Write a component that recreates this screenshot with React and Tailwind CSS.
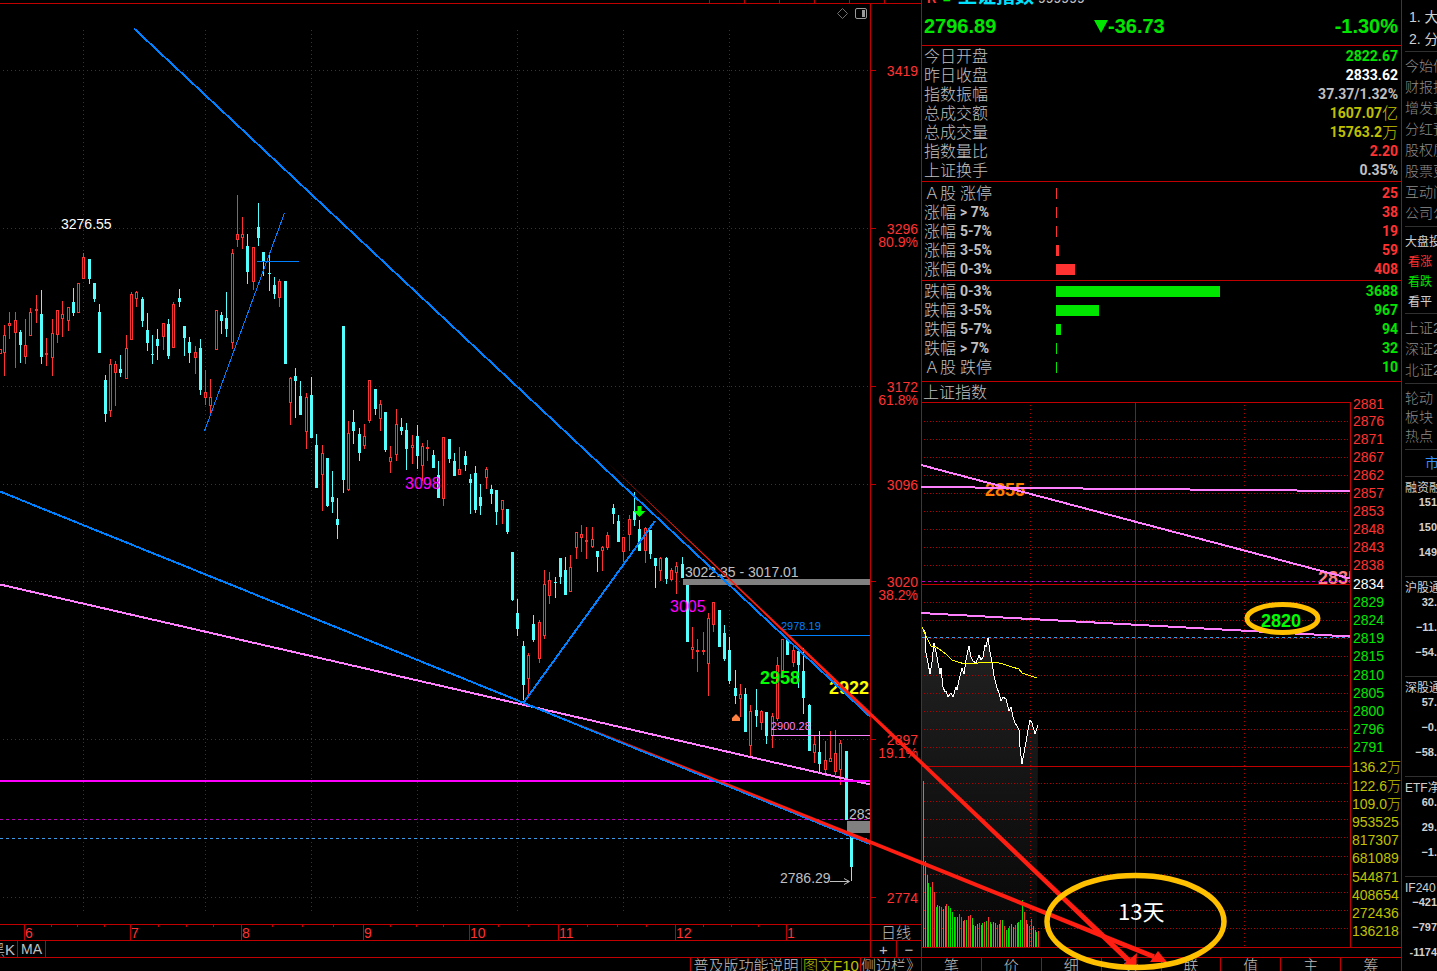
import React from "react";

const SANS = "font-['Liberation_Sans','Noto_Sans_CJK_SC',sans-serif]";

/* x, wick top, wick bottom, body top, body bottom, direction */
const CANDLES = [
  [0, 349, 354, 349, 354, "r"], [4, 325, 376, 335, 353, "r"], [9, 312, 339, 323, 326, "r"], [15, 312, 368, 320, 333, "r"],
  [20, 330, 363, 332, 345, "c"], [25, 319, 364, 345, 357, "r"], [30, 308, 336, 312, 336, "r"], [36, 295, 323, 309, 311, "r"],
  [41, 290, 364, 314, 357, "c"], [46, 338, 366, 353, 355, "r"], [52, 319, 376, 333, 358, "r"], [57, 310, 343, 310, 335, "r"],
  [62, 301, 337, 314, 319, "r"], [68, 307, 331, 307, 321, "r"], [73, 288, 316, 302, 313, "c"], [78, 283, 313, 283, 313, "r"],
  [83, 253, 279, 257, 279, "r"], [89, 259, 284, 259, 279, "c"], [94, 283, 302, 283, 299, "c"], [99, 304, 353, 312, 353, "c"],
  [105, 375, 422, 380, 414, "c"], [110, 359, 417, 364, 411, "r"], [115, 361, 406, 364, 373, "r"], [120, 355, 377, 369, 373, "c"],
  [126, 335, 379, 348, 379, "r"], [131, 292, 340, 294, 340, "r"], [136, 291, 307, 292, 299, "r"], [142, 297, 327, 299, 321, "c"],
  [147, 313, 351, 330, 343, "c"], [152, 335, 364, 354, 355, "c"], [157, 329, 360, 339, 346, "c"], [163, 323, 350, 323, 337, "r"],
  [168, 319, 359, 324, 356, "c"], [173, 302, 348, 304, 348, "r"], [179, 289, 307, 298, 302, "c"], [184, 326, 356, 326, 338, "c"],
  [189, 337, 363, 342, 353, "c"], [195, 346, 374, 352, 358, "r"], [200, 339, 395, 348, 390, "c"], [205, 370, 405, 392, 398, "r"],
  [210, 379, 413, 397, 406, "r"], [216, 310, 350, 310, 350, "r"], [221, 312, 334, 315, 321, "c"], [226, 292, 337, 318, 329, "c"],
  [232, 249, 349, 253, 343, "r"], [237, 195, 247, 234, 240, "r"], [242, 217, 249, 234, 238, "r"], [247, 234, 284, 246, 272, "c"],
  [253, 247, 290, 247, 282, "r"], [258, 203, 246, 227, 238, "c"], [263, 252, 276, 252, 261, "c"], [269, 253, 291, 273, 274, "c"],
  [274, 277, 299, 285, 294, "c"], [279, 279, 307, 281, 298, "r"], [285, 281, 364, 281, 364, "c"], [290, 377, 425, 378, 403, "r"],
  [295, 368, 418, 376, 381, "c"], [300, 381, 415, 396, 415, "c"], [306, 393, 449, 397, 432, "r"], [311, 377, 438, 395, 438, "c"],
  [316, 434, 488, 445, 488, "c"], [322, 445, 511, 453, 475, "r"], [327, 458, 507, 458, 506, "c"], [332, 471, 513, 497, 502, "c"],
  [337, 498, 539, 519, 525, "c"], [343, 326, 493, 326, 480, "c"], [348, 421, 491, 433, 490, "r"], [353, 410, 444, 422, 431, "c"],
  [359, 428, 461, 434, 453, "c"], [364, 424, 449, 436, 446, "r"], [369, 380, 423, 380, 421, "r"], [375, 389, 415, 389, 409, "c"],
  [380, 400, 431, 404, 419, "r"], [385, 412, 452, 412, 450, "c"], [390, 446, 473, 457, 462, "r"], [396, 409, 461, 424, 455, "r"],
  [401, 418, 435, 427, 431, "c"], [406, 423, 470, 430, 449, "c"], [412, 435, 464, 445, 448, "r"], [417, 425, 469, 436, 456, "c"],
  [422, 443, 481, 446, 466, "r"], [427, 440, 461, 447, 449, "r"], [433, 450, 468, 455, 468, "c"], [438, 461, 498, 475, 498, "c"],
  [443, 437, 506, 437, 499, "r"], [449, 439, 463, 439, 459, "c"], [454, 453, 476, 461, 476, "c"], [459, 447, 475, 469, 475, "r"],
  [465, 451, 471, 456, 465, "c"], [470, 474, 514, 479, 483, "c"], [475, 466, 513, 473, 510, "c"], [480, 484, 515, 497, 506, "c"],
  [486, 467, 489, 469, 478, "r"], [491, 485, 504, 489, 494, "c"], [496, 490, 525, 490, 512, "c"], [502, 500, 524, 500, 510, "r"],
  [507, 509, 534, 509, 532, "c"], [512, 552, 601, 552, 600, "c"], [517, 599, 636, 613, 629, "c"], [523, 641, 700, 646, 685, "c"],
  [528, 653, 698, 655, 679, "r"], [533, 615, 642, 624, 640, "c"], [539, 620, 663, 622, 659, "r"], [544, 570, 639, 584, 636, "r"],
  [549, 572, 604, 580, 596, "r"], [555, 577, 598, 582, 583, "c"], [560, 558, 584, 558, 577, "c"], [565, 557, 595, 570, 595, "c"],
  [570, 555, 592, 567, 592, "r"], [576, 532, 559, 532, 548, "r"], [581, 525, 552, 534, 538, "r"], [586, 527, 559, 540, 542, "r"],
  [592, 527, 548, 539, 547, "r"], [597, 551, 572, 551, 557, "c"], [602, 546, 571, 547, 551, "r"], [607, 532, 550, 535, 548, "r"],
  [613, 504, 524, 508, 514, "c"], [618, 515, 542, 521, 542, "c"], [623, 537, 562, 537, 552, "r"], [629, 515, 551, 519, 535, "r"],
  [634, 492, 526, 511, 520, "c"], [639, 520, 551, 529, 551, "c"], [645, 527, 563, 528, 551, "r"], [650, 530, 559, 530, 554, "c"],
  [655, 558, 588, 558, 566, "c"], [660, 557, 581, 558, 571, "r"], [666, 557, 584, 558, 579, "c"], [671, 568, 581, 570, 580, "r"],
  [676, 562, 594, 566, 573, "r"], [682, 557, 578, 564, 578, "c"], [687, 582, 642, 582, 642, "c"], [692, 627, 659, 647, 650, "r"],
  [697, 639, 672, 650, 652, "r"], [703, 632, 655, 650, 652, "r"], [708, 613, 696, 618, 664, "r"], [713, 602, 632, 602, 625, "r"],
  [719, 610, 647, 610, 647, "c"], [724, 625, 661, 633, 659, "c"], [729, 637, 684, 650, 681, "c"], [735, 670, 704, 688, 696, "c"],
  [740, 684, 717, 694, 699, "r"], [745, 688, 732, 694, 732, "c"], [750, 705, 757, 711, 746, "r"], [756, 689, 727, 710, 716, "c"],
  [761, 710, 730, 711, 723, "r"], [766, 712, 744, 712, 736, "c"], [772, 713, 748, 716, 736, "r"], [777, 657, 721, 665, 719, "r"],
  [782, 639, 671, 639, 671, "r"], [787, 639, 655, 639, 655, "c"], [793, 646, 667, 650, 663, "r"], [798, 649, 688, 651, 665, "c"],
  [803, 648, 714, 671, 698, "c"], [809, 704, 751, 705, 751, "c"], [814, 736, 763, 744, 753, "r"], [819, 731, 772, 752, 764, "c"],
  [825, 741, 776, 760, 770, "r"], [830, 731, 762, 758, 762, "r"], [835, 730, 775, 753, 772, "r"], [840, 740, 785, 743, 770, "r"],
  [846, 751, 820, 751, 820, "c"], [851, 835, 881, 836, 867, "c"],
];

function Candle({ c }) {
  const [x, wt, wb, bt, bb, dir] = c;
  const color = dir === "r" ? "#ff3232" : "#54ffff";
  const h = Math.max(bb - bt, 1);
  return (
    <g fill={color}>
      <rect x={x} y={wt} width={1} height={wb - wt} />
      <rect x={x - 1} y={bt} width={3} height={h} />
      {dir === "r" && h > 2 && <rect x={x} y={bt + 1} width={1} height={h - 2} fill="#000" />}
    </g>
  );
}

const PRICE_AXIS = [
  [70, "3419"], [228, "3296", "80.9%"], [386, "3172", "61.8%"], [484, "3096"],
  [581, "3020", "38.2%"], [739, "2897", "19.1%"], [897, "2774"],
];
const DAY_COLUMNS = [83, 205, 311, 417, 517, 623, 729];

function DailyChart() {
  return (
    <svg viewBox="0 4 921 920" className={`block h-auto w-full ${SANS}`} role="img" aria-label="日线">
      <defs>
        <clipPath id="plot"><rect x="0" y="4" width="870" height="920" /></clipPath>
      </defs>
      <g stroke="#b00000" strokeDasharray="1 3" shapeRendering="crispEdges">
        {PRICE_AXIS.map(([y]) => <line key={y} x1="3" x2="870" y1={y + 0.5} y2={y + 0.5} />)}
        {DAY_COLUMNS.map((x) => <line key={x} x1={x + 0.5} x2={x + 0.5} y1="30" y2="911" />)}
      </g>
      <g stroke="#c00000" shapeRendering="crispEdges">
        <line x1="870.5" x2="870.5" y1="4" y2="924" />
        {PRICE_AXIS.map(([y]) => <line key={y} x1="871" x2="876" y1={y + 0.5} y2={y + 0.5} />)}
      </g>
      <g fill="#ff3232" fontSize="14" textAnchor="end">
        {PRICE_AXIS.map(([y, price, ratio]) => (
          <g key={y}>
            <text x="918" y={y + 6}>{price}</text>
            {ratio && <text x="918" y={y + 19}>{ratio}</text>}
          </g>
        ))}
      </g>

      <g clipPath="url(#plot)">
        <line x1="0" x2="870" y1="819.5" y2="819.5" stroke="#b400b4" strokeDasharray="3 3" shapeRendering="crispEdges" />
        <line x1="0" x2="870" y1="838.5" y2="838.5" stroke="#3c9be6" strokeDasharray="3 3" shapeRendering="crispEdges" />
        <g shapeRendering="crispEdges">{CANDLES.map((c) => <Candle key={c[0]} c={c} />)}</g>

        <rect x="683" y="579" width="187" height="6" fill="#808080" />
        <rect x="847" y="821" width="23" height="12" fill="#808080" />

        <g fontSize="14" fill="#c0c0c0">
          <text x="61" y="229" fill="#fff">3276.55</text>
          <text x="685" y="577">3022.35 - 3017.01</text>
          <text x="780" y="883">2786.29</text>
          <text x="849" y="819">2833</text>
        </g>
        <g fontSize="16" fill="#ff00ff">
          <text x="405" y="489">3098</text>
          <text x="670" y="612">3005</text>
        </g>
        <g fontSize="11">
          <text x="781" y="630" fill="#0080ff">2978.19</text>
          <text x="771" y="730" fill="#ff80ff">2900.28</text>
        </g>
        <g fontSize="18" fontWeight="700">
          <text x="760" y="684" fill="#00ff00">2958</text>
          <text x="829" y="694" fill="#ffff00">2922</text>
        </g>

        <g shapeRendering="crispEdges">
          <line x1="788" x2="870" y1="635.5" y2="635.5" stroke="#0080ff" />
          <line x1="771" x2="870" y1="735.5" y2="735.5" stroke="#ff80ff" />
          <line x1="257" x2="299" y1="261.5" y2="261.5" stroke="#0080ff" />
          <line x1="284.5" x2="204.5" y1="213" y2="431" stroke="#0080ff" />
          <line x1="0" x2="870" y1="584.5" y2="784.5" stroke="#ff80ff" strokeWidth="2" />
          <line x1="0" x2="870" y1="781" y2="781" stroke="#ff00ff" strokeWidth="2" />
          <g stroke="#0080ff" strokeWidth="2">
            <line x1="134" x2="870" y1="28.5" y2="716.5" />
            <polyline points="0,491.5 524,703 870,844" fill="none" />
            <line x1="524" x2="655" y1="702" y2="521" />
          </g>
        </g>
        <path d="M637.5 506h4v5h4l-6 6-6-6h4z" fill="#00ff00" />
        <path d="M732 721v-3l4-4 4 4v3z" fill="#ff8040" />
        <path d="M830 881.5h19M844 878.5l5.5 3-5.5 3" stroke="#c0c0c0" fill="none" />
      </g>

      <path d="M842.5 8.500l5 5-5 5-5-5z" stroke="#707070" fill="none" />
      <rect x="855.500" y="8.500" width="11" height="10" rx="1.500" stroke="#9a9a9a" fill="none" />
      <rect x="862" y="10" width="3" height="7" fill="#9a9a9a" />
    </svg>
  );
}

const MONTHS = [[24, "6"], [130, "7"], [241, "8"], [363, "9"], [469, "10"], [558, "11"], [675, "12"], [786, "1"]];
const WEEK_TICKS = [51, 77, 104, 158, 186, 213, 272, 302, 333, 390, 416, 443, 498, 528, 587, 617, 646, 703, 731, 758];

function MonthAxis() {
  return (
    <svg viewBox="0 925 870 15" className={`block h-auto w-full ${SANS}`} role="img" aria-label="月份">
      <g fill="#c00000" shapeRendering="crispEdges">
        {MONTHS.map(([x]) => <rect key={x} x={x} y="925" width="1" height="15" />)}
        {WEEK_TICKS.map((x) => <rect key={x} x={x} y="925" width="1" height="2" />)}
      </g>
      <g fill="#ff3232" fontSize="14">
        {MONTHS.map(([x, label]) => <text key={x} x={x + 1} y="938">{label}</text>)}
      </g>
    </svg>
  );
}

function BarButton({ className = "", children, ...rest }) {
  return (
    <button type="button" className={`overflow-hidden whitespace-nowrap text-center font-light ${className}`} {...rest}>
      {children}
    </button>
  );
}

function DailyPane() {
  return (
    <section className="flex min-w-0 flex-col text-[#c0c0c0]">
      <div className="flex h-[4px] justify-end gap-[34px] border-b border-[#c00000] pr-[36px]">
        {[0, 1, 2, 3, 4, 5].map((i) => <i key={i} className="h-[3px] w-px bg-[#c00000]" />)}
      </div>
      <DailyChart />
      <div className="grid grid-cols-[870fr_51fr] border-t border-[#c00000]">
        <MonthAxis />
        <BarButton className="h-[15px] border-l border-[#c00000] text-[15px] leading-[15px]">日线</BarButton>
      </div>
      <div className="grid h-[17px] grid-cols-[870fr_51fr] border-t border-[#c00000] text-[15px] leading-[17px]">
        <div className="flex">
          <BarButton className="flex w-[18px] justify-end border-r border-[#c00000] pr-[2px]">黑K</BarButton>
          <BarButton className="w-[28px] border-r border-[#c00000] text-[14px]">MA</BarButton>
        </div>
        <div className="grid grid-cols-2 border-l border-[#c00000]">
          <BarButton aria-label="放大">+</BarButton>
          <BarButton aria-label="缩小" className="border-l border-[#c00000]">−</BarButton>
        </div>
      </div>
      <div className="flex h-[14px] justify-end overflow-hidden border-t border-[#c00000] text-[15px] leading-[16px]">
        <BarButton className="w-[111px] border-l border-[#c00000]">普及版功能说明</BarButton>
        <BarButton className="w-[59px] border-l border-[#c00000] text-[#c0c000]">图文F10</BarButton>
        <BarButton className="w-[61px] border-l border-[#c00000] text-left">侧边栏》</BarButton>
      </div>
    </section>
  );
}

const STATS = [
  ["今日开盘", "2822.67", "text-[#00e600]"],
  ["昨日收盘", "2833.62", "text-white"],
  ["指数振幅", "37.37/1.32%", "text-[#c0c0c0]"],
  ["总成交额", "1607.07", "text-[#c0c000]", "亿"],
  ["总成交量", "15763.2", "text-[#c0c000]", "万"],
  ["指数量比", "2.20", "text-[#ff3232]"],
  ["上证换手", "0.35%", "text-[#c0c0c0]"],
];
const RISES = [["Ａ股", "涨停", 25, 1], ["涨幅", "> 7%", 38, 1], ["涨幅", "5-7%", 19, 1], ["涨幅", "3-5%", 59, 3], ["涨幅", "0-3%", 408, 19]];
const FALLS = [["跌幅", "0-3%", 3688, 164], ["跌幅", "3-5%", 967, 43], ["跌幅", "5-7%", 94, 5], ["跌幅", "> 7%", 32, 1], ["Ａ股", "跌停", 10, 1]];

function Breadth({ rows, text, bar }) {
  return (
    <table className="w-full table-fixed border-collapse">
      <tbody>
        {rows.map(([label, band, count, width]) => (
          <tr key={label + band}>
            <th scope="row" className="w-[134px] p-0 text-left">
              <div className="flex h-[19px] gap-[4px] pl-[2px] leading-[19px]">
                <span className="text-[16px] font-light">{label}</span>
                <span className={/停/.test(band) ? "text-[16px] font-light" : "font-['Roboto',sans-serif] text-[14px] font-bold"}>{band}</span>
              </div>
            </th>
            <td className="p-0"><div className={`h-[11px] ${bar}`} style={{ width }} /></td>
            <td className={`w-[80px] p-0 pr-[3px] text-right font-['Roboto',sans-serif] text-[14px] font-bold ${text}`}>
              <div className="h-[19px] leading-[19px]">{count}</div>
            </td>
          </tr>
        ))}
      </tbody>
    </table>
  );
}

const LEVELS = [
  [404, "2881"], [421, "2876"], [439, "2871"], [457, "2867"], [475, "2862"], [493, "2857"], [511, "2853"], [529, "2848"],
  [547, "2843"], [565, "2838"], [584, "2834"], [602, "2829"], [620, "2824"], [638, "2819"], [656, "2815"], [675, "2810"],
  [693, "2805"], [711, "2800"], [729, "2796"], [747, "2791"],
];
const VOLUME_LEVELS = [
  [766, "136.2万"], [785, "122.6万"], [803, "109.0万"], [821, "953525"], [839, "817307"], [857, "681089"],
  [876, "544871"], [894, "408654"], [912, "272436"], [930, "136218"],
];
const GRID_ROWS = [
  421, 439, 457, 475, 493, 511, 529, 547, 565, 602, 620, 638, 656, 675, 693, 711, 729, 747,
  783, 801, 819, 837, 856, 874, 892, 910, 928,
];
const VOLUME =
  "781g 861g 875g 883g 887g 882r 892r 907g 905g 906g 907r 909g 906g 904r 906g 908g 912g 917g 917r 917g 914r 917r 921g 920r 920g 916r 915r 918g 925g 926g 924g 923r 925g 923g 922r 921g 917r 922g 924g 922g 923g 925r 924g 920r 920g 926r 930g 928g 926r 924g 927g 925r 923g 922g 920g 900g 912r 920r 924g 926r 919r 926g 930g 932g 931r".split(" ");
const PRICE =
  "922,627 925,632 926,653 928,663 930,674 932,662 934,643 937,657 940,674 941,668 943,687 945,692 946,691 948,697 951,693 953,697 956,687 957,690 959,680 962,668 964,674 966,660 968,650 969,646 971,657 973,661 976,663 979,655 981,660 983,657 985,645 986,647 988,638 990,652 992,662 994,676 997,688 999,693 1001,701 1003,697 1006,699 1007,703 1009,711 1011,707 1013,717 1015,723 1017,726 1019,730 1020,747 1022,764 1024,753 1026,742 1028,730 1030,720 1032,723 1035,734 1038,725";
const AVERAGE =
  "922,627 927,638 931,646 936,647 942,651 947,655 952,660 958,662 965,664 978,663 987,662 995,662 1003,664 1012,667 1019,669 1022,673 1028,675 1037,678";

function levelColor(y) {
  if (y === 584) return "#ffffff";
  return y < 584 ? "#ff3232" : "#00e600";
}

function IntradayChart() {
  return (
    <svg viewBox="922 402 479 555" className={`block h-auto w-full overflow-visible ${SANS}`} role="img" aria-label="上证指数分时">
      <defs>
        <linearGradient id="area" x1="0" x2="0" y1="627" y2="947" gradientUnits="userSpaceOnUse">
          <stop offset="0" stopColor="#222222" />
          <stop offset="1" stopColor="#060606" />
        </linearGradient>
        <clipPath id="intraday"><rect x="921" y="402" width="429" height="546" /></clipPath>
      </defs>
      <polygon points={`922,947 ${PRICE} 1037,947`} fill="url(#area)" />
      <g stroke="#b00000" shapeRendering="crispEdges">
        <g strokeDasharray="1 2">
          {GRID_ROWS.map((y) => <line key={y} x1="924" x2="1350" y1={y + 0.5} y2={y + 0.5} />)}
        </g>
        <g strokeDasharray="1 3">
          <line x1="1030.500" x2="1030.500" y1="405" y2="947" />
          <line x1="1244.500" x2="1244.500" y1="405" y2="947" />
        </g>
      </g>
      <g stroke="#c00000" shapeRendering="crispEdges">
        <line x1="922" x2="1350" y1="402.500" y2="402.500" />
        <line x1="922" x2="1350" y1="584.500" y2="584.500" />
        <line x1="922" x2="1350" y1="766.500" y2="766.500" />
        <line x1="922" x2="1401" y1="947.500" y2="947.500" />
        <line x1="1135.500" x2="1135.500" y1="402" y2="947" />
        <line x1="1350.500" x2="1350.500" y1="402" y2="947" />
      </g>
      <g shapeRendering="crispEdges">
        {VOLUME.map((v, i) => {
          const top = parseInt(v, 10);
          return <rect key={i} x={923 + Math.round(i * 1.8)} y={top} width="1" height={947 - top} fill={v.endsWith("r") ? "#ff3232" : "#00e600"} />;
        })}
      </g>
      <g fontSize="14">
        {LEVELS.map(([y, label]) => <text key={y} x="1353" y={y + 5} fill={levelColor(y)}>{label}</text>)}
        {VOLUME_LEVELS.map(([y, label]) => <text key={y} x="1352" y={y + 6} fill="#c0c000" fontWeight="300">{label}</text>)}
      </g>
      <g clipPath="url(#intraday)">
        <g fontSize="18" fontWeight="700">
          <text x="985" y="496" fill="#ff8000">2855</text>
          <text x="1318" y="584" fill="#ff8080">2835</text>
          <text x="1261" y="627" fill="#00ff00">2820</text>
        </g>
        <g strokeDasharray="3 3" shapeRendering="crispEdges">
          <line x1="922" x2="1350" y1="581.500" y2="581.500" stroke="#b400b4" />
          <line x1="922" x2="1350" y1="637.500" y2="637.500" stroke="#3c9be6" />
        </g>
        <g stroke="#ff80ff" strokeWidth="2" shapeRendering="crispEdges">
          <line x1="921" x2="1350" y1="465" y2="578.500" />
          <line x1="921" x2="1350" y1="487" y2="491" />
          <line x1="921" x2="1350" y1="613" y2="636.500" />
        </g>
      </g>
      <polyline points={PRICE} fill="none" stroke="#fff" shapeRendering="crispEdges" />
      <polyline points={AVERAGE} fill="none" stroke="#ffff00" shapeRendering="crispEdges" />
    </svg>
  );
}

function QuotePane() {
  return (
    <section className="flex min-w-0 flex-col border-x border-[#c00000] text-[#c0c0c0]">
      <header className="h-[46px] border-b border-[#c00000]">
        <div className="flex h-[6px] items-end overflow-hidden whitespace-nowrap pl-[5px]">
          <span className="w-[16px] text-[13px] font-bold leading-[14px] text-[#ff3232]">R</span>
          <span className="w-[15px] text-[13px] font-bold leading-[14px] text-[#00e600]">=</span>
          <h1 className="text-[19px] font-bold leading-[19px] text-[#00e0ff]">上证指数</h1>
          <span className="pl-[4px] text-[14px] leading-[16px]">999999</span>
        </div>
        <div className="grid grid-cols-3 pl-[2px] pr-[3px] text-[20px] font-bold leading-[40px] text-[#00e600]">
          <span>2796.89</span>
          <span className="flex items-center pl-[12px]">
            <svg viewBox="0 0 14 14" className="h-[14px] w-[14px]" aria-hidden="true"><path d="M0 1h14L7 14z" fill="#00e600" /></svg>
            -36.73
          </span>
          <span className="text-right">-1.30%</span>
        </div>
      </header>
      <div className="border-b border-[#c00000] py-[1px]">
        <table className="w-full border-collapse">
          <tbody>
            {STATS.map(([label, value, color, unit]) => (
              <tr key={label}>
                <th scope="row" className="p-0 text-left font-light">
                  <div className="h-[19px] pl-[2px] text-[16px] leading-[19px]">{label}</div>
                </th>
                <td className={`p-0 ${color}`}>
                  <div className="flex h-[19px] justify-end pr-[3px] leading-[19px]">
                    <span className="font-['Roboto',sans-serif] text-[14px] font-bold">{value}</span>
                    {unit && <span className="text-[16px] font-light">{unit}</span>}
                  </div>
                </td>
              </tr>
            ))}
          </tbody>
        </table>
      </div>
      <div className="border-b border-[#c00000] pb-[1px] pt-[2px]">
        <Breadth rows={RISES} text="text-[#ff3232]" bar="bg-[#ff3232]" />
      </div>
      <div className="border-b border-[#c00000] pb-[4px] pt-[1px]">
        <Breadth rows={FALLS} text="text-[#00e600]" bar="bg-[#00e600]" />
      </div>
      <h2 className="h-[20px] pl-[1px] text-[16px] font-light leading-[22px]">上证指数</h2>
      <IntradayChart />
      <nav className="grid h-[14px] grid-cols-8 overflow-hidden border-t border-[#c00000] text-[15px] leading-[16px]">
        {["笔", "价", "细", "势", "联", "值", "主", "筹"].map((t) => (
          <BarButton key={t} className="border-r border-[#c00000] last:border-r-0">{t}</BarButton>
        ))}
      </nav>
    </section>
  );
}

function SideBlock({ className = "", children }) {
  return <div className={`flex flex-col overflow-hidden whitespace-nowrap border-b border-[#303030] ${className}`}>{children}</div>;
}

function SideLinks({ items, row }) {
  return items.map((t) => <a key={t} href="#" className={`block shrink-0 text-[14px] font-light text-[#8c8c8c] ${row}`}>{t}</a>);
}

const FLOWS = [
  ["融资融", ["151", "150", "149"]],
  ["沪股通", ["32.", "−11.", "−54."]],
  ["深股通", ["57.", "−0.", "−58."]],
  ["ETF净", ["60.", "29.", "−1."]],
];

function FlowBlock({ name, values, className }) {
  return (
    <SideBlock className={className}>
      <div className="h-[14px] text-[12px] leading-[15px]">{name}</div>
      {values.map((v) => <div key={v} className="h-[25px] text-right text-[11px] font-bold leading-[14px]">{v}</div>)}
    </SideBlock>
  );
}

function SidePane() {
  return (
    <aside className="min-w-0 overflow-hidden pl-[3px] text-[#d0d0d0]">
      <SideBlock className="h-[52px] pl-[4px] pt-[6px] text-[14px] leading-[22px]">
        <a href="#">1. 大</a>
        <a href="#">2. 分</a>
      </SideBlock>
      <SideBlock className="h-[175px] pt-[4px]">
        <SideLinks row="h-[21px] leading-[21px]" items={["今始信", "财报披", "增发预", "分红预", "股权质", "股票更", "互动问", "公司公"]} />
      </SideBlock>
      <SideBlock className="h-[87px] pt-[5px] text-[12px] leading-[20px]">
        <span>大盘投</span>
        <button type="button" className="pl-[3px] text-left text-[#ff3232]">看涨</button>
        <button type="button" className="pl-[3px] text-left text-[#00e600]">看跌</button>
        <button type="button" className="pl-[3px] text-left">看平</button>
      </SideBlock>
      <SideBlock className="h-[70px] pt-[4px]">
        <SideLinks row="h-[21px] leading-[21px]" items={["上证2", "深证2", "北证2"]} />
      </SideBlock>
      <SideBlock className="h-[66px] pt-[5px]">
        <SideLinks row="h-[19px] leading-[19px]" items={["轮动", "板块", "热点"]} />
      </SideBlock>
      <SideBlock className="h-[27px] pl-[20px] text-[14px] leading-[26px] text-[#2f8fff]">
        <a href="#">市场</a>
      </SideBlock>
      {FLOWS.map(([name, values]) => <FlowBlock key={name} name={name} values={values} className="h-[100px] pt-[4px]" />)}
      <FlowBlock name="IF240" values={["−421", "−797", "-1174"]} className="h-[94px] border-b-0 pt-[4px]" />
    </aside>
  );
}

function Annotations() {
  return (
    <svg viewBox="0 0 1437 971" className={`pointer-events-none absolute left-0 top-0 h-auto w-full ${SANS}`} aria-hidden="true">
      <g fill="#ff1e12">
        <polygon points="606,461 870,711.500 1131,959 1127,962.500 869,715" />
        <polygon points="560,716.500 870,840 1155,954.500 1153,959 869,843.500" />
        <polygon points="1136,967 1123,965 1137,953" />
        <polygon points="1167,962 1150,962 1158,951" />
      </g>
      <g fill="none" stroke="#ffc000">
        <ellipse cx="1135.500" cy="921.500" rx="88.500" ry="46" strokeWidth="5.500" />
        <ellipse cx="1282.500" cy="618.500" rx="35.500" ry="14" strokeWidth="5" />
      </g>
      <text x="1118" y="920" fill="#fff" fontSize="22" fontFamily="Noto Sans CJK SC, sans-serif">13天</text>
    </svg>
  );
}

export default function App() {
  return (
    <div className={`relative min-h-screen overflow-hidden bg-black ${SANS}`}>
      <main className="grid grid-cols-[minmax(0,921fr)_minmax(0,481fr)_minmax(0,35fr)]">
        <DailyPane />
        <QuotePane />
        <SidePane />
      </main>
      <Annotations />
    </div>
  );
}
